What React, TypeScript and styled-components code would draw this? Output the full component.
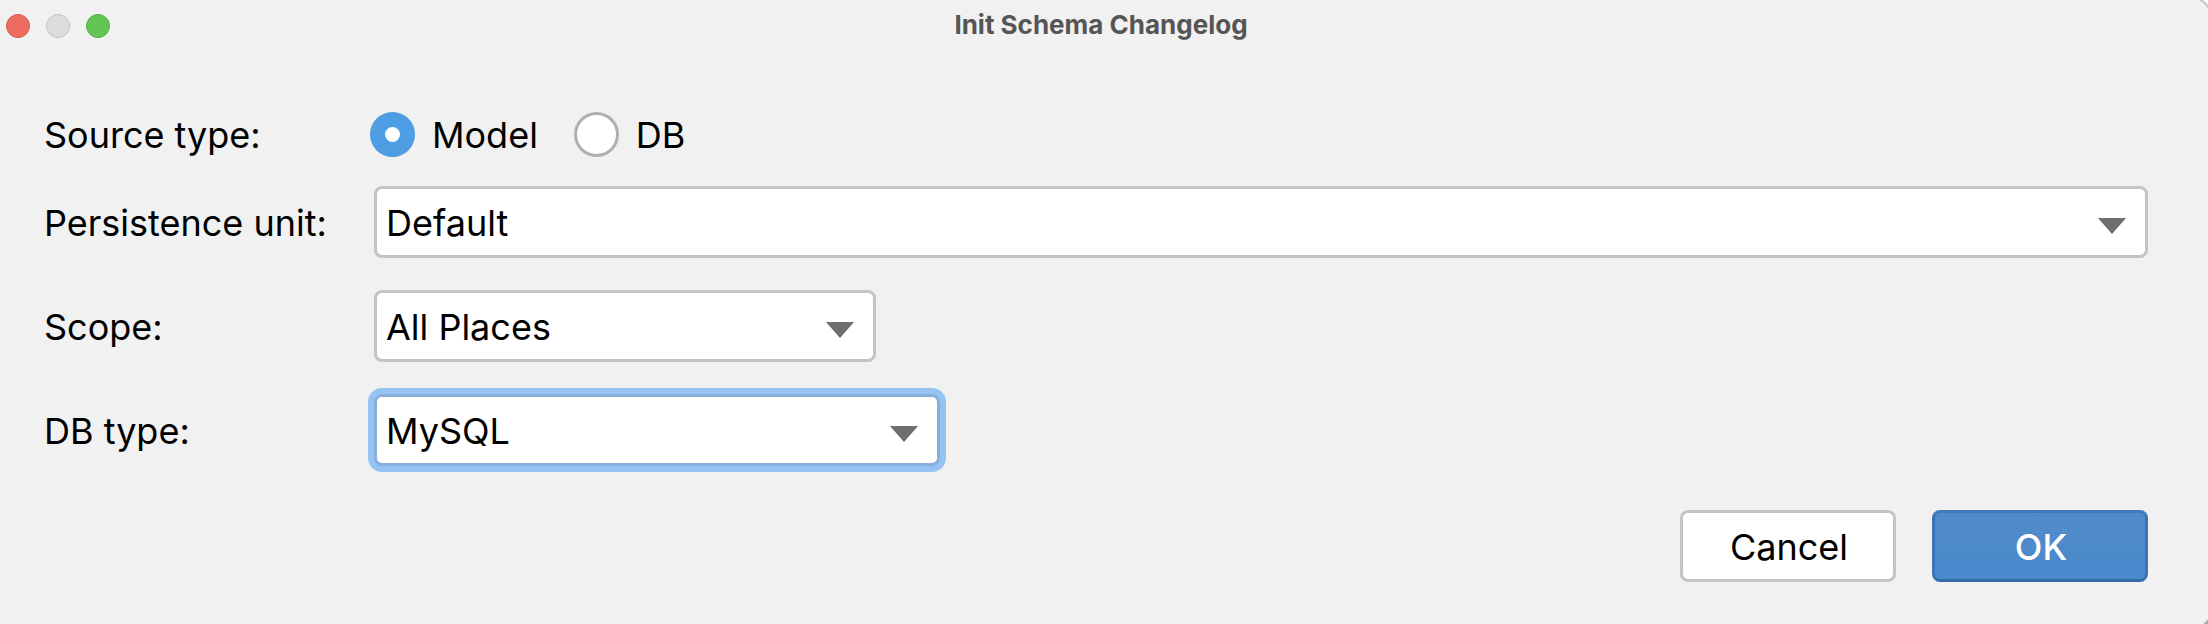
import React from 'react';
import styled, { createGlobalStyle, css } from 'styled-components';

const GlobalStyle = createGlobalStyle`
  *, *::before, *::after { box-sizing: border-box; }
  body {
    margin: 0;
    background: #f1f1f1;
    color: #000;
    font-family: Inter, "Liberation Sans", sans-serif;
    font-size: 36px;
    line-height: 44px;
  }
`;

const Dialog = styled.main`
  min-height: 100vh;
  display: flex;
  flex-direction: column;
  background:
    radial-gradient(circle at 0 100%, transparent 17px, #b4b4b4 18px, #fff 20px) top right / 16px 16px no-repeat,
    radial-gradient(circle at 0 0, transparent 19px, #a8a8a8 20px) bottom right / 16px 16px no-repeat,
    #f1f1f1;
`;

const TitleBar = styled.header`
  display: grid;
  grid-template-columns: 1fr auto 1fr;
  align-items: center;
  height: 52px;
  padding: 0 12px 2px 6px;
`;

const WindowControls = styled.div`
  display: flex;
  gap: 16px;
  padding-top: 2px;
`;

const WindowControl = styled.button<{ $fill: string; $edge: string }>`
  width: 24px;
  height: 24px;
  padding: 0;
  border: 1px solid ${(p) => p.$edge};
  border-radius: 50%;
  background: ${(p) => p.$fill};
`;

const Title = styled.h1`
  margin: 0;
  color: #555;
  font-size: 26px;
  line-height: 32px;
  font-weight: 700;
`;

const Form = styled.form`
  flex: 1;
  display: flex;
  flex-direction: column;
  padding: 46px 60px 42px 44px;
`;

const Fields = styled.div`
  display: grid;
  grid-template-columns: 330px 1fr;
  row-gap: 32px;
  align-items: center;
`;

const FieldLabel = styled.label`
  padding-top: 2px;
  white-space: nowrap;
`;

const RadioGroup = styled.div`
  display: flex;
  align-items: center;
  gap: 36px;
  height: 72px;
  margin: 0 0 -16px -4px;
`;

const SourceLabel = styled.span`
  margin-bottom: -16px;
  padding-top: 2px;
`;

const RadioLabel = styled.label`
  display: flex;
  align-items: center;
  gap: 17px;
`;

const RadioText = styled.span`
  padding-top: 2px;
`;

const Radio = styled.input`
  appearance: none;
  width: 45px;
  height: 45px;
  margin: 0;
  border: 3px solid #b0b0b0;
  border-radius: 50%;
  background: #fff;

  &:checked {
    border: 15px solid #4f9de3;
  }
`;

const SelectBox = styled.div<{ $width?: number }>`
  display: grid;
  align-items: center;
  max-width: ${(p) => (p.$width ? `${p.$width}px` : 'none')};

  > * { grid-area: 1 / 1; }
`;

const Select = styled.select<{ $active?: boolean }>`
  appearance: none;
  width: 100%;
  height: 72px;
  padding: 2px 64px 0 9px;
  border: 3px solid #c4c4c4;
  border-radius: 8px;
  outline: none;
  background: #fff;
  color: inherit;
  font: inherit;

  ${(p) =>
    p.$active &&
    css`
      border-color: #87afda;
      box-shadow: 0 0 0 6px #97c3f3;
    `}
`;

const Arrow = styled.svg`
  justify-self: end;
  width: 28px;
  height: 16px;
  margin: 8px 22px 0 0;
  fill: #6e6e6e;
  pointer-events: none;
`;

const Actions = styled.footer`
  display: flex;
  justify-content: flex-end;
  gap: 36px;
  margin-top: auto;
  padding-top: 44px;
`;

const Button = styled.button<{ $primary?: boolean }>`
  width: 216px;
  height: 72px;
  padding: 2px 0 0 2px;
  border: 3px solid #c4c4c4;
  border-radius: 8px;
  background: #fff;
  color: #000;
  font: inherit;

  ${(p) =>
    p.$primary &&
    css`
      border-color: #4079b8 #3b73b3 #346bab;
      background: linear-gradient(#528bc9, #4989cc);
      color: #fff;
      font-weight: 500;
    `}
`;

type DropdownProps = {
  id: string;
  label: string;
  value: string;
  width?: number;
  active?: boolean;
};

function Dropdown({ id, label, value, width, active }: DropdownProps) {
  return (
    <>
      <FieldLabel htmlFor={id}>{label}</FieldLabel>
      <SelectBox $width={width}>
        <Select id={id} $active={active} defaultValue={value}>
          <option>{value}</option>
        </Select>
        <Arrow viewBox="0 0 28 16" aria-hidden="true">
          <path d="M0 0H28L14 16Z" />
        </Arrow>
      </SelectBox>
    </>
  );
}

export default function App() {
  return (
    <>
      <GlobalStyle />
      <Dialog>
        <TitleBar>
          <WindowControls>
            <WindowControl type="button" aria-label="Close" $fill="#ed6b60" $edge="#dc5b51" />
            <WindowControl type="button" aria-label="Minimize" $fill="#dddddd" $edge="#c3c3c3" />
            <WindowControl type="button" aria-label="Zoom" $fill="#62c554" $edge="#54b146" />
          </WindowControls>
          <Title>Init Schema Changelog</Title>
        </TitleBar>
        <Form onSubmit={(e) => e.preventDefault()}>
          <Fields>
            <SourceLabel id="source-type">Source type:</SourceLabel>
            <RadioGroup role="radiogroup" aria-labelledby="source-type">
              <RadioLabel>
                <Radio type="radio" name="source" value="model" defaultChecked />
                <RadioText>Model</RadioText>
              </RadioLabel>
              <RadioLabel>
                <Radio type="radio" name="source" value="db" />
                <RadioText>DB</RadioText>
              </RadioLabel>
            </RadioGroup>
            <Dropdown id="unit" label="Persistence unit:" value="Default" />
            <Dropdown id="scope" label="Scope:" value="All Places" width={502} />
            <Dropdown id="db-type" label="DB type:" value="MySQL" width={566} active />
          </Fields>
          <Actions>
            <Button type="button">Cancel</Button>
            <Button type="submit" $primary>OK</Button>
          </Actions>
        </Form>
      </Dialog>
    </>
  );
}
